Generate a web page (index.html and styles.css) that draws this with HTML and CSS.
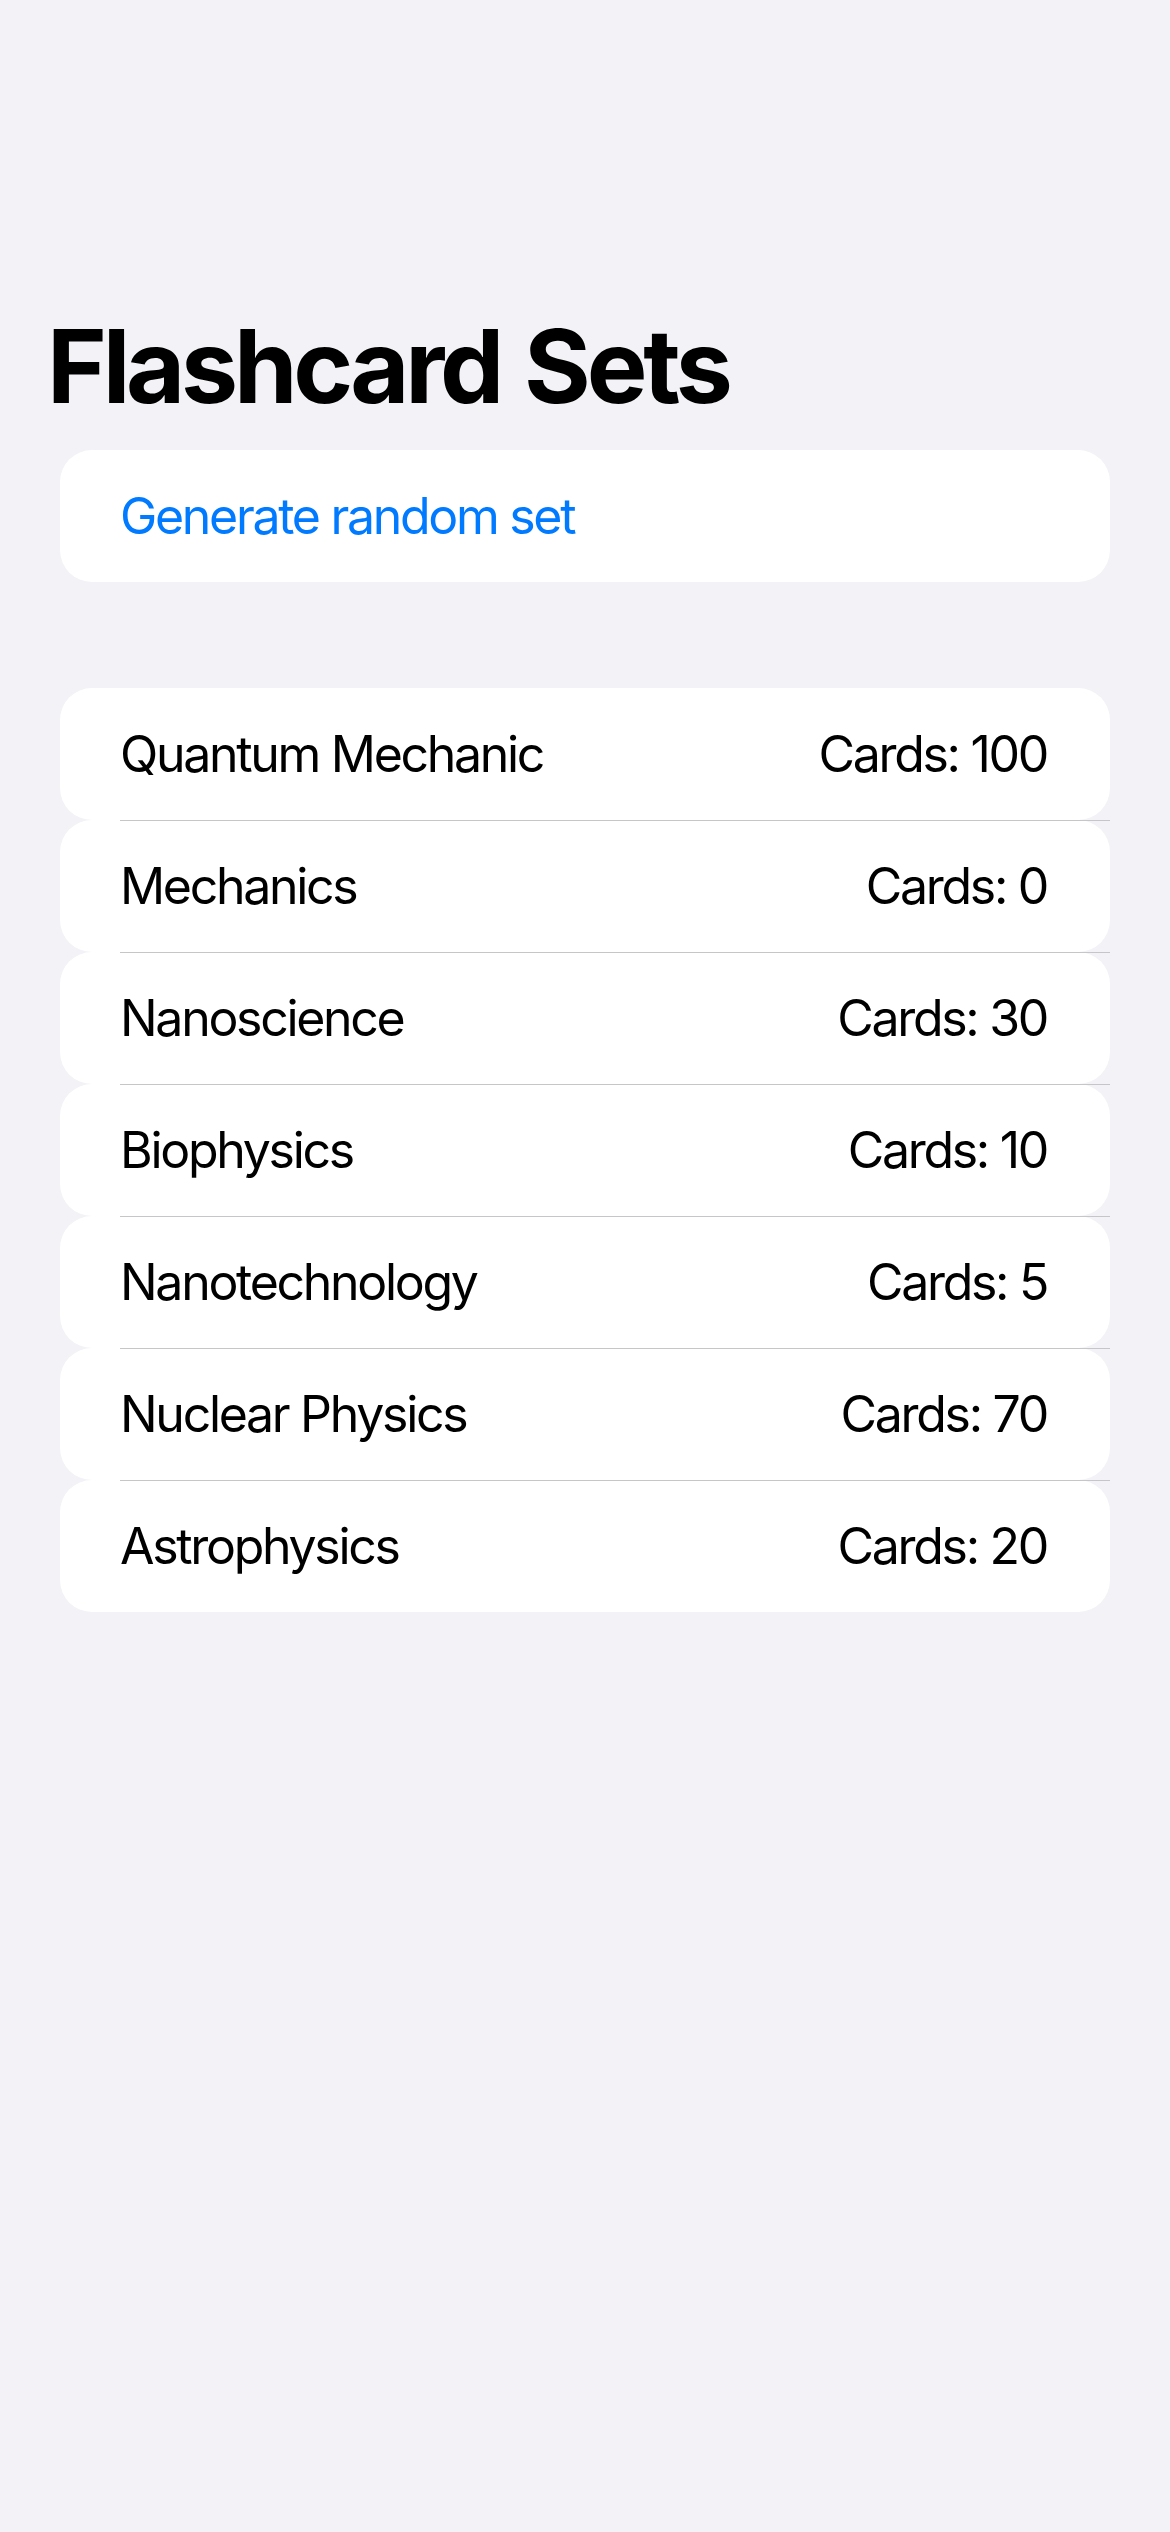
FILE: index.html
```html
<!DOCTYPE html>
<html lang="en">
<head>
<meta charset="utf-8">
<title>Flashcard Sets</title>
<link rel="stylesheet" href="styles.css">
</head>
<body>
  <main class="screen">
    <h1 class="title">Flashcard Sets</h1>
    <section class="group">
      <div class="row action-row"><span class="action">Generate random set</span></div>
    </section>
    <section class="group list">
      <div class="row"><span class="name">Quantum Mechanic</span><span class="count">Cards: 100</span></div>
      <div class="row sep"><span class="name">Mechanics</span><span class="count">Cards: 0</span></div>
      <div class="row sep"><span class="name">Nanoscience</span><span class="count">Cards: 30</span></div>
      <div class="row sep"><span class="name">Biophysics</span><span class="count">Cards: 10</span></div>
      <div class="row sep"><span class="name">Nanotechnology</span><span class="count">Cards: 5</span></div>
      <div class="row sep"><span class="name">Nuclear Physics</span><span class="count">Cards: 70</span></div>
      <div class="row sep"><span class="name">Astrophysics</span><span class="count">Cards: 20</span></div>
    </section>
  </main>
</body>
</html>
```

FILE: styles.css
```css
html, body {
  margin: 0;
  padding: 0;
  background: #f2f2f7;
}
body {
  width: 1170px;
  min-height: 2532px;
  font-family: Inter, "Noto Sans", "Liberation Sans", sans-serif;
  color: #000;
}
.screen {
  display: flex;
  flex-direction: column;
  padding: 305px 60px 0 60px;
}
.title {
  margin: 0 0 23px -13px;
  font-size: 102px;
  line-height: 122px;
  font-weight: 700;
  letter-spacing: -4.2px;
  word-spacing: 4px;
  color: #000;
}
.group {
  display: flex;
  flex-direction: column;
}
.list {
  margin-top: 106px;
}
.row {
  position: relative;
  height: 132px;
  background: #fff;
  border-radius: 32px;
  display: flex;
  align-items: center;
  justify-content: space-between;
  padding: 0 63px 0 60px;
  font-size: 50px;
  line-height: 62px;
  font-weight: 400;
  letter-spacing: -2.3px;
}
.row.sep::before {
  content: "";
  position: absolute;
  top: 0;
  left: 60px;
  right: 0;
  height: 1px;
  background: #c6c6c8;
}
.action {
  color: #007aff;
}
```
